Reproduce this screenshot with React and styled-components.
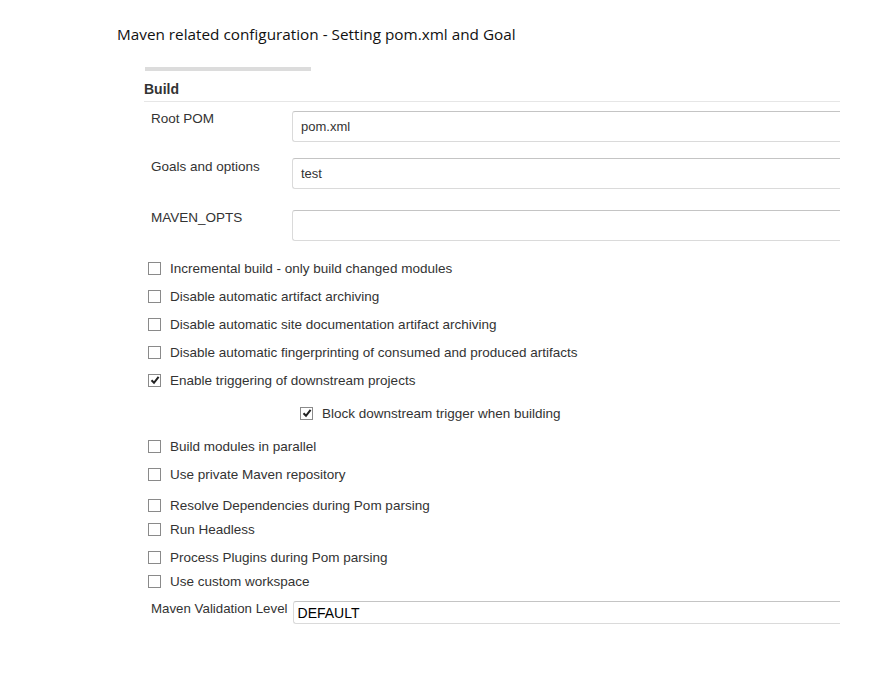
import React from 'react';
import styled, { createGlobalStyle } from 'styled-components';

const GlobalStyle = createGlobalStyle`
  html, body {
    margin: 0;
    padding: 0;
    background: #fff;
  }
  body {
    font-family: "Liberation Sans", Arial, sans-serif;
    color: #333;
  }
`;

const Page = styled.div`
  width: 883px;
  height: 695px;
  overflow: hidden;
  padding-top: 24px;
  box-sizing: border-box;
`;

const Title = styled.h1`
  margin: 0 0 0 117px;
  font-family: "Open Sans", "Noto Sans", sans-serif;
  font-size: 15.3px;
  font-weight: 400;
  line-height: 20px;
  color: #111;
`;

const Section = styled.div`
  margin-left: 144px;
  width: 696px;
`;

const TabBar = styled.div`
  margin: 23px 0 0 1px;
  width: 166px;
  height: 4px;
  background: #dcdcdc;
`;

const SectionHeader = styled.div`
  margin-top: 9px;
  padding-bottom: 3px;
  border-bottom: 1px solid #e6e6e6;
  font-size: 14px;
  font-weight: 700;
  line-height: 18px;
  color: #333;
`;

const FieldRow = styled.div`
  display: flex;
  align-items: flex-start;
  margin-top: ${(p) => p.$top}px;
`;

const FieldLabel = styled.div`
  width: ${(p) => (p.$auto ? 'auto' : '141px')};
  margin-right: ${(p) => (p.$auto ? 5 : 0)}px;
  padding-left: 7px;
  padding-top: ${(p) => p.$pad || 0}px;
  flex-shrink: 0;
  white-space: nowrap;
  font-size: ${(p) => (p.$auto ? 13.3 : 13.5)}px;
  line-height: 16px;
  color: #333;
`;

const TextBox = styled.div`
  flex: 1;
  height: ${(p) => p.$h}px;
  box-sizing: border-box;
  border: 1px solid #dadada;
  border-top-color: #c4c4c4;
  border-right: none;
  border-radius: 3px 0 0 3px;
  display: flex;
  align-items: center;
  padding-left: ${(p) => p.$pl || 8}px;
  font-size: ${(p) => p.$fs || 13}px;
  color: ${(p) => p.$color || '#333'};
  background: #fff;
`;

const CheckRow = styled.label`
  display: flex;
  align-items: center;
  height: 18px;
  margin-top: ${(p) => p.$top}px;
  padding-left: ${(p) => (p.$nested ? 156 : 4)}px;
  font-size: 13.5px;
  color: #333;
`;

const Box = styled.span`
  width: 11px;
  height: 11px;
  border: 1px solid #8a8a8a;
  background: #fff;
  margin-right: 9px;
  display: flex;
  align-items: center;
  justify-content: center;
  flex-shrink: 0;
`;

const Tick = () => (
  <svg width="10" height="10" viewBox="0 0 10 10">
    <path d="M1.5 5.2 L4 7.8 L8.6 1.8" fill="none" stroke="#222" strokeWidth="2" />
  </svg>
);

const options = [
  { text: 'Incremental build - only build changed modules', y: 268 },
  { text: 'Disable automatic artifact archiving', y: 296 },
  { text: 'Disable automatic site documentation artifact archiving', y: 324 },
  { text: 'Disable automatic fingerprinting of consumed and produced artifacts', y: 352 },
  { text: 'Enable triggering of downstream projects', y: 380, checked: true },
  { text: 'Block downstream trigger when building', y: 413, checked: true, nested: true },
  { text: 'Build modules in parallel', y: 446 },
  { text: 'Use private Maven repository', y: 474 },
  { text: 'Resolve Dependencies during Pom parsing', y: 505 },
  { text: 'Run Headless', y: 529 },
  { text: 'Process Plugins during Pom parsing', y: 557 },
  { text: 'Use custom workspace', y: 581 },
];

export default function App() {
  // last field ends at y=241; each check row is 18px tall, centred on y
  let prev = 241;
  return (
    <Page>
      <GlobalStyle />
      <Title>Maven related configuration - Setting pom.xml and Goal</Title>
      <Section>
        <TabBar />
        <SectionHeader>Build</SectionHeader>
        <FieldRow $top={9}>
          <FieldLabel $pad={0}>Root POM</FieldLabel>
          <TextBox $h={31}>pom.xml</TextBox>
        </FieldRow>
        <FieldRow $top={16}>
          <FieldLabel $pad={1}>Goals and options</FieldLabel>
          <TextBox $h={31}>test</TextBox>
        </FieldRow>
        <FieldRow $top={21}>
          <FieldLabel $pad={0}>MAVEN_OPTS</FieldLabel>
          <TextBox $h={31} />
        </FieldRow>
        {options.map((o) => {
          const top = o.y - 9 - prev;
          prev = o.y + 9;
          return (
            <CheckRow key={o.text} $top={top} $nested={o.nested}>
              <Box>{o.checked && <Tick />}</Box>
              {o.text}
            </CheckRow>
          );
        })}
        <FieldRow $top={11}>
          <FieldLabel $auto $pad={0}>Maven Validation Level</FieldLabel>
          <TextBox $h={23} $pl={4} $fs={14} $color="#000">DEFAULT</TextBox>
        </FieldRow>
      </Section>
    </Page>
  );
}
